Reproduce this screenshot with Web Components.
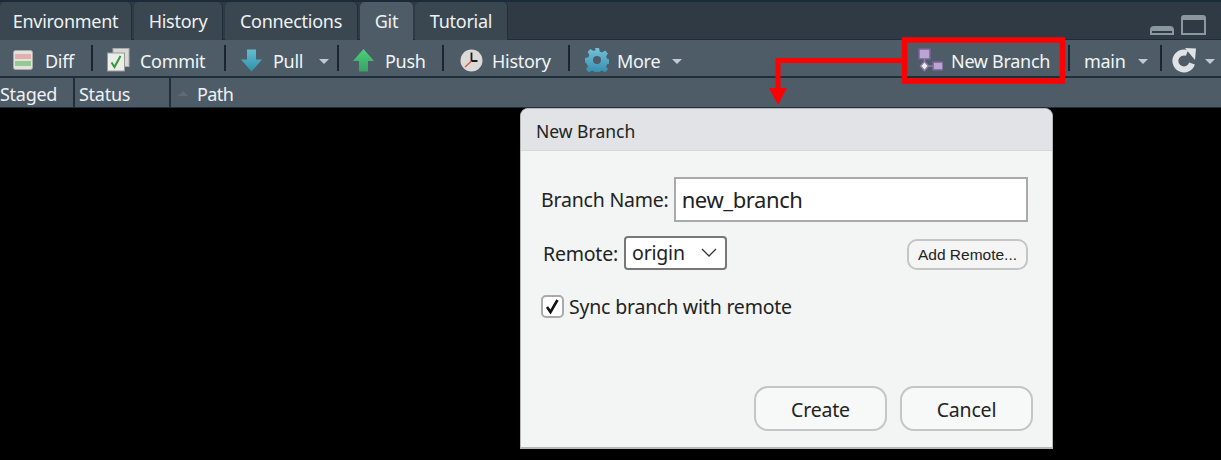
<!DOCTYPE html>
<html>
<head>
<meta charset="utf-8">
<style>
  html, body { margin: 0; padding: 0; background: #000; }
  body { width: 1221px; height: 460px; overflow: hidden; position: relative; font-family: "Noto Sans", "Open Sans", sans-serif; }
</style>
</head>
<body>
<git-pane>
  <tab-bar slot="tabs">
    <pane-tab style="--w:132px">Environment</pane-tab>
    <pane-tab style="--w:89px">History</pane-tab>
    <pane-tab style="--w:133px">Connections</pane-tab>
    <pane-tab style="--w:53px" active>Git</pane-tab>
    <pane-tab style="--w:93px">Tutorial</pane-tab>
  </tab-bar>
  <tool-bar slot="toolbar">
    <tool-item style="--w:91px;--l:13px;--g:12px" label="Diff">
      <svg slot="icon" width="20" height="20" viewBox="0 0 20 20"><rect x=".5" y=".5" width="19" height="19" rx="2" fill="#e3e3dd" stroke="#aaa"/><rect x="2" y="4" width="16" height="5" fill="#e3aeae"/><rect x="2" y="11" width="16" height="5" fill="#97c795"/></svg>
    </tool-item>
    <tool-sep></tool-sep>
    <tool-item style="--w:131px;--l:14px;--g:10px" label="Commit">
      <svg slot="icon" width="23" height="24" viewBox="0 0 23 24"><rect x="6" y=".5" width="16" height="18" fill="#d9dad6" stroke="#aaa"/><rect x=".5" y="5" width="17" height="18" fill="#ecece8" stroke="#999"/><path d="M4.500 14.500l3 4.500 6-11" fill="none" stroke="#2f9a38" stroke-width="2"/></svg>
    </tool-item>
    <tool-sep></tool-sep>
    <tool-item style="--w:111px;--l:15px;--g:11px;--c:16px" label="Pull" caret>
      <svg slot="icon" width="21" height="23" viewBox="0 0 21 23"><defs><linearGradient id="pg" x1="0" y1="0" x2="0" y2="1"><stop offset="0" stop-color="#62bccf"/><stop offset="1" stop-color="#2f93ad"/></linearGradient></defs><path d="M6 .500h9v10h6l-10.500 12L0 10.500h6z" fill="url(#pg)"/></svg>
    </tool-item>
    <tool-sep></tool-sep>
    <tool-item style="--w:103px;--l:14px;--g:11px" label="Push">
      <svg slot="icon" width="21" height="23" viewBox="0 0 21 23"><defs><linearGradient id="ug" x1="0" y1="0" x2="0" y2="1"><stop offset="0" stop-color="#4fd07f"/><stop offset="1" stop-color="#35a45f"/></linearGradient></defs><path d="M10.500 0L21 12h-6v10.500H6V12H0z" fill="url(#ug)"/></svg>
    </tool-item>
    <tool-sep></tool-sep>
    <tool-item style="--w:124px;--l:16px;--g:9px" label="History">
      <svg slot="icon" width="23" height="23" viewBox="0 0 23 23"><circle cx="11.500" cy="11.500" r="11" fill="#dcdad6"/><path d="M11.500 3.500v8.500h6" fill="none" stroke="#1d1d1d" stroke-width="1.800"/><path d="M11.500 12L5 18" stroke="#d9534f" stroke-width="1.300"/></svg>
    </tool-item>
    <tool-sep></tool-sep>
    <tool-item style="--w:130px;--l:15px;--g:8px;--c:12px" label="More" caret>
      <svg slot="icon" width="24" height="24" viewBox="0 0 24 24"><defs><linearGradient id="gg" x1="0" y1="0" x2="0" y2="1"><stop offset="0" stop-color="#73c3da"/><stop offset="1" stop-color="#2f88aa"/></linearGradient></defs><path fill="url(#gg)" fill-rule="evenodd" d="M10 0h4l.8 3.400 2.300 1 3-1.800 2.800 2.800-1.800 3 1 2.300 3.400.8v4l-3.400.8-1 2.300 1.800 3-2.800 2.800-3-1.800-2.300 1-.8 3.400h-4l-.8-3.400-2.300-1-3 1.800-2.800-2.800 1.800-3-1-2.300L0 14v-4l3.400-.8 1-2.300-1.800-3 2.800-2.800 3 1.800 2.300-1zM12 8a4 4 0 1 0 0 8 4 4 0 0 0 0-8z"/></svg>
    </tool-item>
    <tool-gap></tool-gap>
    <tool-item style="--w:150px;--l:0px;--g:8px" label="New Branch">
      <svg slot="icon" width="25" height="24" viewBox="0 0 25 24"><g fill="#b9a6cf" stroke="#7a5f9c" stroke-width="1.500"><rect x="1" y="1" width="11" height="10"/><rect x="15" y="14" width="10" height="8"/><path d="M6.500 13.500l4 4.500-4 4.500-4-4.500z" fill="#eee" stroke="#8f79ad"/></g><path d="M6.500 11v2M11 18h4" stroke="#8f79ad" stroke-width="1.500"/></svg>
    </tool-item>
    <tool-sep></tool-sep>
    <tool-item style="--w:90px;--l:14px;--g:0px;--c:12px" label="main" caret></tool-item>
    <tool-sep></tool-sep>
    <tool-item style="--w:59px;--l:10px;--g:0px;--c:8px" caret>
      <svg slot="icon" width="25" height="25" viewBox="0 0 25 25"><path d="M20 15.500A8.500 8.500 0 1 1 15 5" fill="none" stroke="#dfe3e6" stroke-width="6"/><path d="M13 0l11 .5-1 11.500z" fill="#dfe3e6"/></svg>
    </tool-item>
  </tool-bar>
  <col-head slot="head"></col-head>
</git-pane>

<callout-arrow></callout-arrow>

<branch-dialog title-text="New Branch"></branch-dialog>

<script>
class GitPane extends HTMLElement {
  constructor() {
    super();
    this.attachShadow({ mode: 'open' }).innerHTML = `
      <style>
        :host { display: block; color: #f1f5f6; font-size: 18px; letter-spacing: -0.27px; }
        .top { border-top: 2px solid #1b2b3a; }
      </style>
      <div class="top">
        <slot name="tabs"></slot>
        <slot name="toolbar"></slot>
        <slot name="head"></slot>
      </div>
    `;
  }
}

class TabBar extends HTMLElement {
  constructor() {
    super();
    this.attachShadow({ mode: 'open' }).innerHTML = `
      <style>
        :host { display: block; height: 38px; background: #2f3a44; box-shadow: inset 0 -1px 0 #1d2d3b; }
        .row { display: flex; gap: 2px; height: 38px; position: relative; }
        .win { margin-left: auto; display: flex; align-items: flex-end; gap: 7px; padding: 0 15px 5px 0; }
        .min { width: 24px; height: 9px; border: 2px solid #8b979f; border-top-width: 3px; border-radius: 4px 4px 0 0; box-sizing: border-box; background: #8b979f; position: relative; }
        .min::after { content: ""; position: absolute; left: 0; right: 0; bottom: 0; height: 2px; background: #2f3a44; }
        .max { width: 25px; height: 20px; box-sizing: border-box; border: 2px solid #8b979f; border-top-width: 5px; border-radius: 3px 3px 0 0; }
      </style>
      <div class="row">
        <slot></slot>
        <div class="win"><div class="min"></div><div class="max"></div></div>
      </div>
    `;
  }
}

class PaneTab extends HTMLElement {
  constructor() {
    super();
    this.attachShadow({ mode: 'open' }).innerHTML = `
      <style>
        :host { display: flex; align-items: center; justify-content: center; box-sizing: border-box; width: var(--w); height: 38px;
          background: #3a4650; border-radius: 5px 5px 0 0; border-right: 1px solid #1f2e3b; color: #eef2f3; font-size: 18px; }
        :host([active]) { background: #4e5c68; border-right: none; height: 39px; padding-bottom: 1px; }
      </style>
      <slot></slot>
    `;
  }
}

class ToolBar extends HTMLElement {
  constructor() {
    super();
    this.attachShadow({ mode: 'open' }).innerHTML = `
      <style>
        :host { display: flex; align-items: center; height: 38px; box-sizing: border-box; background: #4e5c68; border-bottom: 2px solid #1f2e3b; }
      </style>
      <slot></slot>
    `;
  }
}

class ToolItem extends HTMLElement {
  constructor() {
    super();
    const label = this.getAttribute('label');
    const caret = this.hasAttribute('caret');
    this.attachShadow({ mode: 'open' }).innerHTML = `
      <style>
        :host { display: flex; flex: none; align-items: center; box-sizing: border-box; width: var(--w); padding-left: var(--l); font-size: 18px; letter-spacing: -0.3px; color: #f1f5f6; }
        .icon { display: flex; margin-right: var(--g); margin-top: 4px; }
        .label { padding-top: 6px; white-space: nowrap; }
        .caret { width: 0; height: 0; border: 5px solid transparent; border-top: 5px solid #c3cbd0; border-bottom: 0; margin-left: var(--c); margin-top: 7px; }
      </style>
      <span class="icon"><slot name="icon"></slot></span>
      ${label ? `<span class="label">${label}</span>` : ''}
      ${caret ? '<span class="caret"></span>' : ''}
    `;
  }
}

class ToolSep extends HTMLElement {
  constructor() {
    super();
    this.attachShadow({ mode: 'open' }).innerHTML = `
      <style>:host { display: block; width: 2px; height: 26px; background: #1b2530; flex: none; }</style>
    `;
  }
}

class ToolGap extends HTMLElement {
  constructor() {
    super();
    this.attachShadow({ mode: 'open' }).innerHTML = `<style>:host { display: block; flex: 1; }</style>`;
  }
}

class ColHead extends HTMLElement {
  constructor() {
    super();
    this.attachShadow({ mode: 'open' }).innerHTML = `
      <style>
        :host { display: grid; grid-template-columns: 75px 96px 1fr; height: 29px; background: #4e5c68; border-bottom: 1px solid #1f2e3b; font-size: 18px; color: #eef2f3; }
        div { display: flex; align-items: center; border-right: 2px solid #1f2e3b; box-sizing: border-box; padding-top: 2px; }
        .status { padding-left: 4px; }
        .path { border: none; padding-left: 7px; letter-spacing: -0.6px; }
        .sort { width: 0; height: 0; border: 5px solid transparent; border-bottom: 5px solid #5e6a74; border-top: 0; margin-right: 9px; }
      </style>
      <div>Staged</div>
      <div class="status">Status</div>
      <div class="path"><span class="sort"></span>Path</div>
    `;
  }
}

// red annotation, sits over the toolbar
class CalloutArrow extends HTMLElement {
  constructor() {
    super();
    this.attachShadow({ mode: 'open' }).innerHTML = `
      <style>
        :host { display: block; position: absolute; left: 0; top: 0; z-index: 3; pointer-events: none; }
        svg { display: block; }
      </style>
      <svg width="1221" height="110" viewBox="0 0 1221 110">
        <rect x="904.500" y="40" width="158" height="41" fill="none" stroke="#f00" stroke-width="5.500"/>
        <path d="M904 60.500H778V92" fill="none" stroke="#f00" stroke-width="5"/>
        <path d="M769 88h18l-9 17z" fill="#f00"/>
      </svg>
    `;
  }
}

class BranchDialog extends HTMLElement {
  constructor() {
    super();
    this.attachShadow({ mode: 'open' }).innerHTML = `
      <style>
        :host { display: flex; flex-direction: column; position: absolute; left: 520px; top: 108px; width: 533px; height: 341px; box-sizing: border-box;
          background: #f3f4f4; border: 1px solid #b5b7b9; border-bottom-width: 2px; border-radius: 8px 8px 0 0; color: #222; font-size: 19.500px; letter-spacing: -0.2px; overflow: hidden; }
        .head { height: 42px; background: #e1e3e6; border-bottom: 1px solid #d6d8da; display: flex; align-items: center; padding: 2px 0 0 15px; box-sizing: border-box; font-size: 17.500px; letter-spacing: 0; flex: none; }
        .body { flex: 1; display: flex; flex-direction: column; padding: 26px 24px 16px 20px; }
        .row { display: flex; align-items: center; }
        .name label { margin-right: 5px; }
        .input { flex: 1; height: 45px; box-sizing: border-box; border: 2px solid #aaa; background: #fff; padding: 0 6px 2px; display: flex; align-items: center; font-size: 22px; letter-spacing: -0.4px; color: #222; }
        .remote { margin-top: 14px; padding-left: 2px; }
        .remote label { margin-right: 6px; }
        .select { width: 103px; height: 34px; box-sizing: border-box; border: 2px solid #777; border-radius: 4px; background: #fff; display: flex; align-items: center; justify-content: space-between; padding: 0 8px 2px 6px; }
        .add { margin-left: auto; width: 121px; height: 31px; box-sizing: border-box; margin-top: 3px; border: 2px solid #c4c5c6; border-radius: 10px; background: #f5f5f6; font: 15.500px "Liberation Sans", Arial, sans-serif; letter-spacing: 0; display: flex; align-items: center; justify-content: center; }
        .sync { margin-top: 23px; }
        .check { width: 23px; height: 23px; box-sizing: border-box; border: 2px solid #aaa; border-radius: 5px; background: #fff; margin-right: 5px; display: flex; }
        .foot { margin-top: auto; display: flex; justify-content: flex-end; gap: 13px; margin-right: -5px; }
        .btn { width: 133px; height: 45px; box-sizing: border-box; border: 2px solid #c4c5c6; border-radius: 14px; background: #f7f8f8; display: flex; align-items: center; justify-content: center; padding-top: 2px; }
      </style>
      <div class="head">${this.getAttribute('title-text')}</div>
      <div class="body">
        <div class="row name"><label>Branch Name:</label><div class="input">new_branch</div></div>
        <div class="row remote">
          <label>Remote:</label>
          <div class="select">origin<svg width="16" height="9" viewBox="0 0 16 9"><path d="M1 1l7 7 7-7" fill="none" stroke="#333" stroke-width="1.300"/></svg></div>
          <div class="add">Add Remote...</div>
        </div>
        <div class="row sync">
          <div class="check"><svg width="19" height="19" viewBox="0 0 19 19"><path d="M4 10l3.500 5L14.500 3" fill="none" stroke="#111" stroke-width="2.600"/></svg></div>
          Sync branch with remote
        </div>
        <div class="foot"><div class="btn">Create</div><div class="btn">Cancel</div></div>
      </div>
    `;
  }
}

customElements.define('git-pane', GitPane);
customElements.define('tab-bar', TabBar);
customElements.define('pane-tab', PaneTab);
customElements.define('tool-bar', ToolBar);
customElements.define('tool-item', ToolItem);
customElements.define('tool-sep', ToolSep);
customElements.define('tool-gap', ToolGap);
customElements.define('col-head', ColHead);
customElements.define('callout-arrow', CalloutArrow);
customElements.define('branch-dialog', BranchDialog);
</script>
</body>
</html>
